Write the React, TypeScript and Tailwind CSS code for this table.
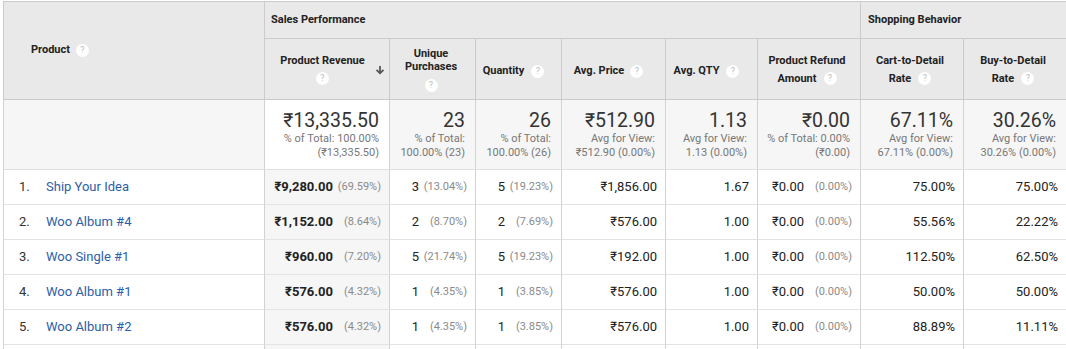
type Row = {
  n: number;
  name: string;
  rev: string;
  revP: string;
  up: string;
  upP: string;
  q: string;
  qP: string;
  price: string;
  qty: string;
  refund: string;
  refundP: string;
  cart: string;
  buy: string;
};

const rows: Row[] = [
  { n: 1, name: "Ship Your Idea", rev: "₹9,280.00", revP: "(69.59%)", up: "3", upP: "(13.04%)", q: "5", qP: "(19.23%)", price: "₹1,856.00", qty: "1.67", refund: "₹0.00", refundP: "(0.00%)", cart: "75.00%", buy: "75.00%" },
  { n: 2, name: "Woo Album #4", rev: "₹1,152.00", revP: "(8.64%)", up: "2", upP: "(8.70%)", q: "2", qP: "(7.69%)", price: "₹576.00", qty: "1.00", refund: "₹0.00", refundP: "(0.00%)", cart: "55.56%", buy: "22.22%" },
  { n: 3, name: "Woo Single #1", rev: "₹960.00", revP: "(7.20%)", up: "5", upP: "(21.74%)", q: "5", qP: "(19.23%)", price: "₹192.00", qty: "1.00", refund: "₹0.00", refundP: "(0.00%)", cart: "112.50%", buy: "62.50%" },
  { n: 4, name: "Woo Album #1", rev: "₹576.00", revP: "(4.32%)", up: "1", upP: "(4.35%)", q: "1", qP: "(3.85%)", price: "₹576.00", qty: "1.00", refund: "₹0.00", refundP: "(0.00%)", cart: "50.00%", buy: "50.00%" },
  { n: 5, name: "Woo Album #2", rev: "₹576.00", revP: "(4.32%)", up: "1", upP: "(4.35%)", q: "1", qP: "(3.85%)", price: "₹576.00", qty: "1.00", refund: "₹0.00", refundP: "(0.00%)", cart: "88.89%", buy: "11.11%" },
];

const totals: { big: string; lines: string[] }[] = [
  { big: "₹13,335.50", lines: ["% of Total: 100.00%", "(₹13,335.50)"] },
  { big: "23", lines: ["% of Total:", "100.00% (23)"] },
  { big: "26", lines: ["% of Total:", "100.00% (26)"] },
  { big: "₹512.90", lines: ["Avg for View:", "₹512.90 (0.00%)"] },
  { big: "1.13", lines: ["Avg for View:", "1.13 (0.00%)"] },
  { big: "₹0.00", lines: ["% of Total: 0.00%", "(₹0.00)"] },
  { big: "67.11%", lines: ["Avg for View:", "67.11% (0.00%)"] },
  { big: "30.26%", lines: ["Avg for View:", "30.26% (0.00%)"] },
];

function Help() {
  return (
    <span className="inline-flex h-[13px] w-[13px] shrink-0 items-center justify-center rounded-full bg-white text-[9px] font-normal leading-none text-[#bdbdbd]">
      ?
    </span>
  );
}

const head = "border-l border-b border-[#cbcbcb] bg-[#e9e9e9] text-[11px] font-bold text-[#222]";
const body = "border-l border-b border-l-[#d2d2d2] border-b-[#e3e3e3] text-[13px] text-[#222]";

function Split({ v, p, bold }: { v: string; p: string; bold?: boolean }) {
  return (
    <div className="flex h-full items-center justify-end pr-[8px]">
      <span className={bold ? "font-bold" : ""}>{v}</span>
      <span className="w-[48px] text-right text-[11px] text-[#8a8a8a]">{p}</span>
    </div>
  );
}

export default function App() {
  return (
    <div className="h-[349px] w-[1066px] overflow-hidden bg-white pl-[3px] pt-[1px] font-[Roboto,sans-serif]">
      <div className="grid grid-cols-[261px_125px_86px_86px_104px_92px_103px_103px_103px] grid-rows-[37px_61px_70px_35px_35px_35px_35px_35px_35px] border-t border-[#cbcbcb]">
        {/* header */}
        <div className={`${head} row-span-2 flex items-center gap-[6px] pl-[27px]`}>
          Product <Help />
        </div>
        <div className={`${head} col-span-6 flex items-center pl-[6px]`}>Sales Performance</div>
        <div className={`${head} col-span-2 flex items-center pl-[7px]`}>Shopping Behavior</div>

        <div className={`${head} flex items-center pl-[5px]`}>
          <div className="flex flex-1 flex-col items-center gap-[5px] pt-[1px]">
            <span className="leading-[13px]">Product Revenue</span>
            <Help />
          </div>
          <svg width="10" height="10" viewBox="0 0 10 10" className="mr-[4px] mt-[1px]">
            <path d="M5 1v7M1.5 4.8 5 8.3l3.5-3.5" fill="none" stroke="#555" strokeWidth="1.8" />
          </svg>
        </div>
        <div className={`${head} flex flex-col items-center justify-center pr-[3px] pt-[1px] text-center leading-[13px]`}>
          <span>Unique</span>
          <span>Purchases</span>
          <span className="mt-[5px]">
            <Help />
          </span>
        </div>
        <div className={`${head} flex items-center justify-center gap-[7px] pr-[10px] pt-[5px]`}>
          Quantity <Help />
        </div>
        <div className={`${head} flex items-center justify-center gap-[6px] pr-[10px] pt-[5px]`}>
          Avg. Price <Help />
        </div>
        <div className={`${head} flex items-center justify-center gap-[7px] pr-[10px] pt-[5px]`}>
          Avg. QTY <Help />
        </div>
        <div className={`${head} flex flex-col items-center justify-center pr-[4px] pt-[1px] leading-[18px]`}>
          <span>Product Refund</span>
          <span className="flex items-center gap-[7px]">
            Amount <Help />
          </span>
        </div>
        <div className={`${head} flex flex-col items-center justify-center pr-[4px] pt-[1px] leading-[18px]`}>
          <span>Cart-to-Detail</span>
          <span className="flex items-center gap-[7px]">
            Rate <Help />
          </span>
        </div>
        <div className={`${head} flex flex-col items-center justify-center pr-[4px] pt-[1px] leading-[18px]`}>
          <span>Buy-to-Detail</span>
          <span className="flex items-center gap-[7px]">
            Rate <Help />
          </span>
        </div>

        {/* totals */}
        <div className="border-l border-b border-l-[#d2d2d2] border-b-[#e0e0e0] bg-[#f6f6f6]" />
        {totals.map((t, i) => (
          <div
            key={t.big + i}
            className={`flex flex-col items-end justify-center border-l border-b border-l-[#d2d2d2] border-b-[#e0e0e0] pr-[10px] text-right ${
              i === 0 ? "bg-white" : "bg-[#f6f6f6]"
            }`}
          >
            <span className="text-[19.5px] leading-[22px] text-[#333]">{t.big}</span>
            {t.lines.map((l) => (
              <span key={l} className="text-[11px] leading-[14px] text-[#777]">
                {l}
              </span>
            ))}
          </div>
        ))}

        {/* rows */}
        {rows.map((r) => (
          <div key={r.n} className="contents">
            <div className={`${body} flex items-center pl-[15px]`}>
              <span className="w-[27px] text-[#333]">{r.n}.</span>
              <span className="text-[#2d5ea8]">{r.name}</span>
            </div>
            <div className={`${body} bg-[#f6f6f6]`}>
              <Split v={r.rev} p={r.revP} bold />
            </div>
            <div className={body}>
              <Split v={r.up} p={r.upP} />
            </div>
            <div className={body}>
              <Split v={r.q} p={r.qP} />
            </div>
            <div className={`${body} flex items-center justify-end pr-[8px]`}>{r.price}</div>
            <div className={`${body} flex items-center justify-end pr-[8px]`}>{r.qty}</div>
            <div className={body}>
              <Split v={r.refund} p={r.refundP} />
            </div>
            <div className={`${body} flex items-center justify-end pr-[8px]`}>{r.cart}</div>
            <div className={`${body} flex items-center justify-end pr-[8px]`}>{r.buy}</div>
          </div>
        ))}

        {/* next row, cut off by the window */}
        <div className={body} />
        <div className={`${body} bg-[#f6f6f6]`} />
        <div className={body} />
        <div className={body} />
        <div className={body} />
        <div className={body} />
        <div className={body} />
        <div className={body} />
        <div className={body} />
      </div>
    </div>
  );
}
